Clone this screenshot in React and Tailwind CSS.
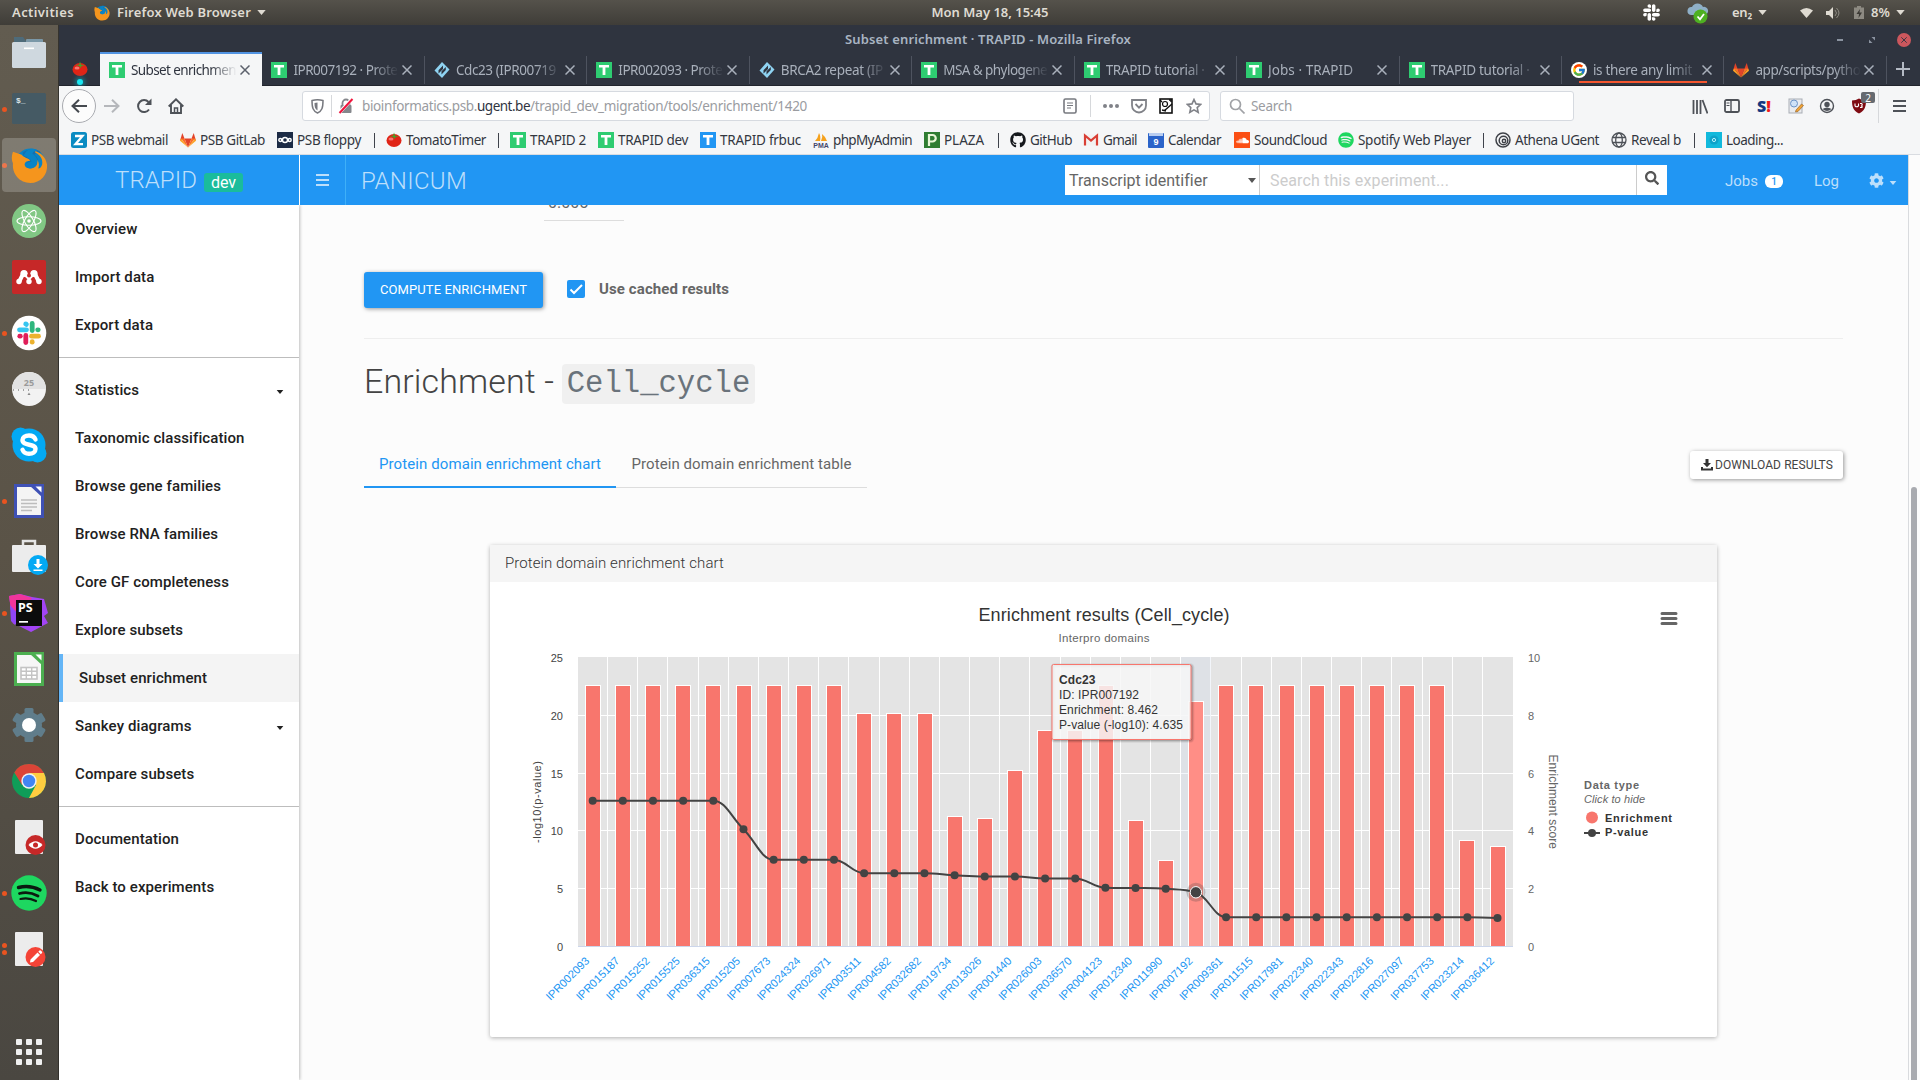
import React, { useLayoutEffect, useRef } from "react";
import { FaGithub, FaSpotify, FaSoundcloud, FaSearch, FaCog, FaSlack } from "react-icons/fa";
import { FcGoogle } from "react-icons/fc";

const UI = "font-['Noto_Sans',sans-serif]";

/* One line of text whose tracking is adjusted so that it fills a given width. */
function Fit({ w, className = "", children }) {
  const ref = useRef(null);
  useLayoutEffect(() => {
    const el = ref.current;
    el.style.letterSpacing = "0px";
    const natural = el.getBoundingClientRect().width;
    const n = el.textContent.length;
    el.style.letterSpacing = (w - natural) / n + "px";
  }, [w, children]);
  return (
    <span ref={ref} className={"inline-block shrink-0 whitespace-pre " + className}>
      {children}
    </span>
  );
}

const Caret = ({ className = "" }) => (
  <svg viewBox="0 0 10 6" className={className} fill="currentColor"><path d="M0 0h10L5 6z" /></svg>
);

/* ---------- small logos ---------- */
const TIcon = ({ blue }) => (
  <svg viewBox="0 0 16 16" className="size-4 shrink-0">
    <rect width="16" height="16" fill={blue ? "#2196f3" : "#2ecc71"} />
    <path d="M3 3h10v2.6H9.4V13H6.6V5.600H3z" fill="#fff" />
  </svg>
);
const Tomato = () => (
  <svg viewBox="0 0 16 16" className="size-4 shrink-0">
    <ellipse cx="8" cy="8.500" rx="7.500" ry="6.500" fill="#e02416" />
    <ellipse cx="5" cy="7" rx="2.500" ry="1.600" fill="#f99" opacity=".7" />
    <path d="M3.500 4 7 3.700 8 .5l1.200 3.200 3.800.5-3.300.9L8.500 7 7 5.100z" fill="#4f9a28" />
  </svg>
);
const Fox = ({ className = "size-4" }) => (
  <svg viewBox="0 0 16 16" className={className + " shrink-0"}>
    <path d="M0 8.800 2.300 1l2.200 5.600z" fill="#e24329" />
    <path d="M16 8.800 13.700 1 11.500 6.600z" fill="#e24329" />
    <path d="M4.500 6.600h7L8 15.500z" fill="#e24329" />
    <path d="M1 6.600h3.500L8 15.500zM15 6.600h-3.500L8 15.500z" fill="#fc6d26" />
    <path d="M0 8.800 1 6.600 8 15.500zM16 8.800 15 6.600 8 15.500z" fill="#fca326" />
  </svg>
);
const Interpro = () => (
  <svg viewBox="0 0 16 16" className="size-4 shrink-0">
    <path d="M8 0 15.500 7.500 8 16 .5 8.500z" fill="#8fd3f2" />
    <path d="M9 3.500 4.500 8.300v3.200L9 7zM7.500 12.500 11.800 8V5L7.500 9.200z" fill="#2f343f" />
  </svg>
);
const Firefox = ({ className }) => (
  <svg viewBox="0 0 38 38" className={className}>
    <circle cx="20" cy="17" r="15.500" fill="#0a84c6" />
    <path d="M12 6C17 1 27 1 31 6c-3-1-6 0-7 2 4 2 5 8 1 12-3 3-8 2-9-1-1-2 0-3 2-4-3-1-5-4-6-9z" fill="#1470b0" />
    <path d="M25 6c5 2 8 7 7 12-1 3-2 4-4 4 1-3 1-6-1-9 0 5-3 9-8 9-3 0-5-2-5-4 0-3 3-4 6-4-3-3-7-3-9-6L2 5c-2 6-1 9 0 12-1 11 7 20 18 20 10 0 18-8 17-19-1-6-4-11-12-14z" fill="#f5951d" />
    <path d="M13 9c4 2 7 3 8 6-2 0-5 1-6 3 0 2 2 4 5 4 5 0 8-4 7-9-1-3-3-5-5-6 0-2 3-4 6-3-5-4-12-3-15 5z" fill="#0a84c6" />
  </svg>
);

/* ---------- desktop top bar ---------- */
function TopBar() {
  return (
    <header className={"flex h-[25px] shrink-0 items-center bg-gradient-to-b from-[#55524b] to-[#3f3d38] text-[13px] font-semibold text-[#dfdbd2] " + UI}>
      <div className="flex w-[910px] items-center pl-3">
        <Fit w={62}>Activities</Fit>
        <Firefox className="ml-5 size-[16px]" />
        <Fit w={134} className="ml-[7px]">Firefox Web Browser</Fit>
        <Caret className="ml-[6px] h-[5px] w-[9px]" />
      </div>
      <div className="flex w-[160px] justify-center"><Fit w={117}>Mon May 18, 15:45</Fit></div>
      <div className="flex flex-1 items-center pl-[572px]">
        <FaSlack className="size-[19px] shrink-0 text-white" />
        <svg viewBox="0 0 22 22" className="ml-[26px] size-[22px] shrink-0">
          <path d="M4 13a4 4 0 0 1 1-8 6 6 0 0 1 11 0 4 4 0 0 1 2 8z" fill="#8fb0c8" />
          <circle cx="13.500" cy="14.500" r="7" fill="#4eb022" />
          <path d="m10.500 14.500 2.500 2.800L17 12" stroke="#fff" strokeWidth="1.800" fill="none" />
        </svg>
        <Fit w={20} className="ml-[23px]">en₂</Fit>
        <Caret className="ml-[6px] h-[5px] w-[9px] shrink-0" />
        <svg viewBox="0 0 13 10" className="ml-[33px] h-[10px] w-[13px] shrink-0"><path d="M0 2.500Q6.500-2.500 13 2.500L6.500 10z" fill="#dfdbd2" /></svg>
        <svg viewBox="0 0 14 12" className="ml-[13px] h-3 w-[14px] shrink-0"><path d="M0 4h3l4-4v12L3 8H0z" fill="#dfdbd2" /><path d="M9 3q3 3 0 6M10.500 1q5 5 0 10" stroke="#8d8a82" fill="none" /></svg>
        <svg viewBox="0 0 10 13" className="ml-[14px] h-[13px] w-[10px] shrink-0"><path d="M3 0h4v1.500h3V13H0V1.500h3z" fill="#8d8a82" /><path d="M6 3 2.500 8H5l-.5 4L8 6.500H5.500z" fill="#3b3934" /></svg>
        <Fit w={19} className="ml-[7px]">8%</Fit>
        <Caret className="ml-[6px] h-[5px] w-[9px] shrink-0" />
      </div>
    </header>
  );
}

/* ---------- dock ---------- */
const D = ({ children }) => <svg viewBox="0 0 36 36" className="size-9 overflow-visible">{children}</svg>;
const dock = [
  { icon: <D><path d="M3 2h9l3 4h17v10H3z" fill="#4e6b7a" /><rect x="15" y="4" width="17" height="8" rx="1" fill="#7b98a8" /><rect x="1" y="7" width="34" height="26" rx="1.500" fill="#cfd8df" /><rect x="13" y="12.500" width="10" height="1.600" fill="#fff" /></D> },
  { dots: 1, icon: <D><rect x="1" y="2" width="34" height="31" rx="1.500" fill="#455a64" /><text x="5" y="12" fontSize="8" fontWeight="700" fill="#dfe6ea" fontFamily="Liberation Mono">$_</text></D> },
  { dots: 1, active: true, icon: <Firefox className="size-[37px]" /> },
  { icon: <D><circle cx="18" cy="18" r="17" fill="#81c784" /><g fill="none" stroke="#fff" strokeWidth="1.100"><ellipse cx="18" cy="18" rx="12" ry="4.300" /><ellipse cx="18" cy="18" rx="12" ry="4.300" transform="rotate(60 18 18)" /><ellipse cx="18" cy="18" rx="12" ry="4.300" transform="rotate(120 18 18)" /></g><circle cx="18" cy="18" r="1.800" fill="#fff" /></D> },
  { icon: <D><rect x="1" y="1" width="34" height="34" rx="2" fill="#c62828" /><path d="M8 23 12 15M28 23 24 15M12.500 13.500 18 19l5.500-5.500" fill="none" stroke="#fff" strokeWidth="4" /><circle cx="8" cy="22.500" r="2.700" fill="#fff" /><circle cx="18" cy="22.500" r="2.700" fill="#fff" /><circle cx="28" cy="22.500" r="2.700" fill="#fff" /><circle cx="13" cy="14.500" r="3.600" fill="#fff" /><circle cx="23" cy="14.500" r="3.600" fill="#fff" /><circle cx="18" cy="16.500" r="2" fill="#c62828" /></D> },
  { dots: 1, icon: <D><circle cx="18" cy="18" r="17.300" fill="#fff" /><g strokeWidth="4.800" strokeLinecap="round"><path d="M8.500 14.800h7" stroke="#36c5f0" /><path d="M21.200 8.500v7" stroke="#2eb67d" /><path d="M20.500 21.200h7" stroke="#ecb22e" /><path d="M14.800 20.500v7" stroke="#e01e5a" /><path d="M14.800 8.800v.1l.6.5" stroke="#36c5f0" /><path d="M27.200 14.800h-.5" stroke="#2eb67d" /><path d="M21.200 27.200v-.5" stroke="#ecb22e" /><path d="M8.800 21.200h.5" stroke="#e01e5a" /></g></D> },
  { icon: <D><circle cx="18" cy="18" r="17" fill="#f2f2f2" /><path d="M1 18a17 17 0 0 1 34 0z" fill="#e2e2e2" /><text x="18" y="15" textAnchor="middle" fontSize="9" fontWeight="700" fill="#9a9a9a" fontFamily="Noto Sans">25</text><path d="M2 19h18" stroke="#888" strokeWidth="1.500" strokeDasharray="1 4" /><path d="m16.500 24 1.500-2.500 1.500 2.500z" fill="#888" /></D> },
  { icon: <D><circle cx="18" cy="18" r="16.500" fill="#03a9f4" /><circle cx="9.500" cy="9.500" r="9" fill="#03a9f4" /><circle cx="26.500" cy="26.500" r="9" fill="#03a9f4" /><path d="M24.500 12.500c-1-2.500-3.500-4-6.500-4-4 0-6.500 1.800-6.500 4.500 0 6.500 13 3 13 9 0 3-2.500 4.800-6.500 4.800-3.500 0-5.500-1.500-6.500-4" fill="none" stroke="#fff" strokeWidth="4.400" strokeLinecap="round" /></D> },
  { dots: 1, icon: <D><path d="M4.500 2.500h27v31h-27z" fill="#f4f4f4" stroke="#3f51b5" strokeWidth="3" /><path d="m18 2 14 13V2z" fill="#3f51b5" /><path d="M24.500 3.500h6v6z" fill="#fff" /><path d="M10 17h16M10 20.500h16M10 24h16M10 27.500h11" stroke="#bdbdbd" strokeWidth="1.500" /></D> },
  { icon: <D><path d="M12 6V2h12v4" fill="none" stroke="#e4e4e4" strokeWidth="2.500" /><rect x="1" y="6" width="34" height="27" rx="1" fill="#ececec" /><circle cx="27" cy="26" r="10" fill="#03a9f4" /><path d="M25.500 20h3v5h3L27 29.500 22.500 25h3zM22.500 30.500h9V32h-9z" fill="#fff" /></D> },
  { dots: 1, icon: <D><path d="M-2 1 9-1l12 3 12 2 4 14-4 3 4 7-17 9-10-5-8-4z" fill="#a344f5" /><path d="m-2 1 11-2 12 4L2 29z" fill="#f0359b" /><path d="M-1 10 8 20 4 30 0 26z" fill="#8f46f7" /><rect x="5" y="5" width="26" height="26" fill="#0c0c0c" /><text x="7" y="17" fontSize="12.500" fontWeight="700" fill="#fff" fontFamily="Noto Sans">PS</text><rect x="8" y="26" width="9" height="1.700" fill="#fff" /></D> },
  { icon: <D><rect x="4.500" y="2.500" width="27" height="31" fill="#f6f6f6" stroke="#4caf50" strokeWidth="3" /><path d="m18 2 14 13V2z" fill="#4caf50" /><path d="M24.500 3.500h6v6z" fill="#fff" /><rect x="10" y="16.500" width="16" height="11.500" fill="#fff" stroke="#c4c4c4" strokeWidth="1.600" /><path d="M10 20.300h16M10 24.200h16M15.300 16.500V28M20.700 16.500V28" stroke="#c4c4c4" strokeWidth="1.400" /></D> },
  { icon: <D><g fill="#607d8b"><circle cx="18" cy="18" r="13" /><rect x="13.500" y="1" width="9" height="34" rx="1.500" /><rect x="13.500" y="1" width="9" height="34" rx="1.500" transform="rotate(60 18 18)" /><rect x="13.500" y="1" width="9" height="34" rx="1.500" transform="rotate(120 18 18)" /></g><circle cx="18" cy="18" r="7" fill="#fff" /></D> },
  { icon: <D><circle cx="18" cy="18" r="17" fill="#0f9d58" /><path d="M3.300 9.500A17 17 0 0 1 33 10H18L11 22z" fill="#db4437" /><path d="M18 10h15a17 17 0 0 1-15 25l7-13z" fill="#ffcd40" /><circle cx="18" cy="18" r="7.700" fill="#f1f1f1" /><circle cx="18" cy="18" r="6.200" fill="#4285f4" /></D> },
  { icon: <D><rect x="4" y="1" width="28" height="34" rx="1" fill="#ececec" /><circle cx="24.500" cy="26" r="10" fill="#c62828" /><path d="M17.500 26q7-7.500 14 0-7 7.500-14 0z" fill="#fff" /><circle cx="24.500" cy="26" r="2.500" fill="#c62828" /></D> },
  { dots: 1, icon: <D><circle cx="18" cy="18" r="17.700" fill="#1ed760" /><g fill="none" stroke="#0b1a10" strokeLinecap="round"><path d="M7.500 12.500q11-3 21.500 2.500" strokeWidth="3.400" /><path d="M8.500 18.500q9.500-2.500 18.500 2.500" strokeWidth="2.800" /><path d="M9.500 24q8-2 15.500 2" strokeWidth="2.200" /></g></D> },
  { dots: 2, icon: <D><rect x="4" y="1" width="28" height="34" rx="1" fill="#ececec" /><circle cx="24.500" cy="26" r="10" fill="#f44336" /><path d="m19 31.500.5-3 7-7 2.500 2.500-7 7zM27.300 20.700l1.200-1.200q.8-.5 1.500.2l1 1q.5.600 0 1.300l-1.200 1.200z" fill="#fff" /></D> },
];

function Dock() {
  return (
    <nav className="flex w-[59px] shrink-0 flex-col border-r border-[#35332e] bg-gradient-to-b from-[#625c50] via-[#5a5347] to-[#4a4741]">
      {dock.map((d, i) => (
        <div key={i} className="flex h-14 shrink-0 items-center">
          <div className="flex w-[9px] flex-col items-end gap-[2px] pr-[2px]">
            {Array.from({ length: d.dots || 0 }, (_, k) => <i key={k} className="size-[5px] rounded-full bg-[#e95420]" />)}
          </div>
          <div className={"-ml-[7px] flex h-[54px] w-[54px] items-center justify-center rounded-[4px] " + (d.active ? "bg-white/20" : "")}>{d.icon}</div>
        </div>
      ))}
      <div className="ml-4 mt-[62px] grid w-[26px] grid-cols-3 gap-[4px]">
        {Array.from({ length: 9 }, (_, i) => <i key={i} className="size-[6px] rounded-[1px] bg-[#f0f0f0]" />)}
      </div>
    </nav>
  );
}

/* ---------- browser chrome ---------- */
const tabs = [
  { t: "Subset enrichmen", w: 105, icon: <TIcon /> },
  { t: "IPR007192 · Prote", w: 104, icon: <TIcon /> },
  { t: "Cdc23 (IPR00719", w: 100, icon: <Interpro /> },
  { t: "IPR002093 · Prote", w: 104, icon: <TIcon /> },
  { t: "BRCA2 repeat (IP", w: 102, icon: <Interpro /> },
  { t: "MSA & phylogene", w: 104, icon: <TIcon /> },
  { t: "TRAPID tutorial ·", w: 99, icon: <TIcon /> },
  { t: "Jobs · TRAPID", w: 85, icon: <TIcon /> },
  { t: "TRAPID tutorial ·", w: 99, icon: <TIcon /> },
  { t: "is there any limit", w: 99, icon: <span className="flex size-4 shrink-0 items-center justify-center rounded-full bg-white"><FcGoogle className="size-[14px]" /></span>, mark: true },
  { t: "app/scripts/pytho", w: 105, icon: <Fox /> },
];

const Cross = ({ className }) => (
  <svg viewBox="0 0 10 10" className={className} stroke="currentColor" strokeWidth="1.500"><path d="m0.500.5 9 9M9.500.5l-9 9" /></svg>
);

function TitleAndTabs() {
  return (
    <div className={"flex h-[61px] shrink-0 flex-col border-b border-[#22252d] bg-[#2f343f] " + UI}>
      <div className="flex h-[27px] items-center pt-[2px]">
        <div className="flex flex-1 justify-center pl-[80px] text-[13px] font-semibold text-[#a9b4c2]"><Fit w={286}>Subset enrichment · TRAPID - Mozilla Firefox</Fit></div>
        <div className="flex w-[83px] items-center text-[#8b93a0]">
          <i className="h-[2px] w-[6px] bg-current" />
          <svg viewBox="0 0 6 6" className="ml-[26px] size-[6px]" fill="currentColor"><path d="M2.500 0H6v3.500zM0 2.500V6h3.500z" /></svg>
          <span className="ml-[22px] flex size-[14px] items-center justify-center rounded-full bg-[#cc575d] text-[#2f343f]"><Cross className="size-[6px]" /></span>
        </div>
      </div>
      <div className="flex h-[33px] text-[13.5px]">
        <div className="flex w-[41px] flex-col items-center pt-[9px]">
          <Tomato />
          <i className="mt-[2px] size-[6px] rounded-full bg-[#19e5f0] shadow-[0_0_4px_2px_rgba(10,160,180,.6)]" />
        </div>
        {tabs.map((tab, i) => {
          const on = i === 0;
          return (
            <div key={i} className={"relative flex w-[162.450px] shrink-0 items-center pl-[9px] " + (on ? "h-[34px] border-t-2 border-[#5294e2] bg-[#f5f6f7] text-[#2f343f]" : "pt-[3px] text-[#a9b0bb]")}>
              {tab.icon}
              <div className="ml-[6px] w-[106px] pt-px [mask-image:linear-gradient(to_right,#000_75%,transparent_100%)]"><Fit w={tab.w}>{tab.t}</Fit></div>
              <Cross className={"ml-[3px] size-[10px] " + (on ? "text-[#5c616c]" : "")} />
              {!on && <i className="ml-auto h-[28px] w-px bg-[#4e535f]" />}
              {tab.mark && <i className="absolute bottom-[2px] left-[17px] h-[2px] w-[128px] bg-[#f4562f]" />}
            </div>
          );
        })}
        <div className="flex flex-1 items-center justify-center text-[#b4bac4]"><svg viewBox="0 0 14 14" className="size-[14px]" stroke="currentColor" strokeWidth="2"><path d="M7 0v14M0 7h14" /></svg></div>
      </div>
    </div>
  );
}

function NavBar() {
  return (
    <div className={"flex h-[40px] shrink-0 items-center bg-[#f5f6f7] text-[13.5px] text-[#5c616c] " + UI}>
      <span className="ml-[3px] flex size-[34px] items-center justify-center rounded-full border border-[#a9abb0] bg-[#fcfcfc]">
        <svg viewBox="0 0 16 14" className="h-[14px] w-4" fill="none" stroke="#45494f" strokeWidth="2"><path d="M16 7H1.500M8 .8 1.500 7 8 13.200" /></svg>
      </span>
      <svg viewBox="0 0 16 14" className="ml-[8px] h-[14px] w-4" fill="none" stroke="#b5b7bb" strokeWidth="2"><path d="M0 7h14.500M8 .8 14.500 7 8 13.200" /></svg>
      <svg viewBox="0 0 16 16" className="ml-[16px] size-4" fill="none" stroke="#4e5258" strokeWidth="2"><path d="M13 11.500A6 6 0 1 1 12.500 4" /><path d="M15.500.5v6.500H9z" fill="#4e5258" stroke="none" /></svg>
      <svg viewBox="0 0 16 16" className="ml-[16px] size-4" fill="none" stroke="#4e5258" strokeWidth="1.900"><path d="M.7 8.500 8 1.300l7.300 7.200M3 7v8h10V7" /><path d="M6.500 14.500V10h3v4.500" strokeWidth="1.500" /></svg>

      <div className="ml-[118px] flex h-[30px] w-[908px] items-center rounded-[3px] border border-[#d6dae0] bg-white">
        <svg viewBox="0 0 13 15" className="ml-[8px] h-[15px] w-[13px]" fill="none" stroke="#77797f" strokeWidth="1.500"><path d="M1 1.500Q6.500 0 12 1.500C12 9 11 12 6.500 14 2 12 1 9 1 1.500z" /><path d="M6.500 3.500V11.500C4 10 3.500 8 3.500 4z" fill="#77797f" stroke="none" /></svg>
        <i className="ml-[7px] h-[22px] w-px bg-[#d6d8db]" />
        <svg viewBox="0 0 16 16" className="ml-[6px] size-4"><path d="M4.500 8V5a3.500 3.500 0 0 1 7 0v3" fill="none" stroke="#85878c" strokeWidth="1.800" /><rect x="2.500" y="7" width="11" height="8" rx="1" fill="#85878c" /><path d="M1 15 14 1" stroke="#fff" strokeWidth="3.500" /><path d="M1.500 15 14.500 1" stroke="#f0143c" strokeWidth="2" /></svg>
        <Fit w={115} className="ml-[8px] text-[#9a9ca1]">bioinformatics.psb.</Fit>
        <Fit w={53} className="text-[#2f343f]">ugent.be</Fit>
        <Fit w={277} className="text-[#9a9ca1]">/trapid_dev_migration/tools/enrichment/1420</Fit>
        <svg viewBox="0 0 14 16" className="ml-[256px] h-4 w-[14px]" fill="none" stroke="#77797f" strokeWidth="1.600"><rect x="1" y="1" width="12" height="14" rx="1.500" /><path d="M4 5h6M4 7.500h6M4 10h4" strokeWidth="1.100" /></svg>
        <i className="ml-[13px] h-[22px] w-px bg-[#d6d8db]" />
        <span className="ml-[12px] flex gap-[2px]">{[0, 1, 2].map(k => <i key={k} className="size-[4px] rounded-full bg-[#808288]" />)}</span>
        <svg viewBox="0 0 16 15" className="ml-[12px] h-[15px] w-4" fill="none" stroke="#808288" strokeWidth="1.800"><path d="M1 1h14v5.500a7 7 0 0 1-14 0z" /><path d="m4.500 5 3.500 3.600L11.500 5" /></svg>
        <svg viewBox="0 0 14 16" className="ml-[12px] h-4 w-[14px]" fill="none" stroke="#111" strokeWidth="1.600"><rect x="1" y="1" width="12" height="14" /><circle cx="6" cy="6" r="2.500" strokeWidth="1.200" /><path d="m3 4-2-2M10 2h2v2M5 13 13 6M3 12l4 1" strokeWidth="1.400" /></svg>
        <svg viewBox="0 0 16 16" className="ml-[13px] size-4" fill="none" stroke="#808288" strokeWidth="1.600"><path d="m8 1.500 2 4.400 4.700.5-3.500 3.200 1 4.700L8 11.900l-4.200 2.400 1-4.700L1.300 6.400 6 5.900z" /></svg>
      </div>

      <div className="ml-[10px] flex h-[30px] w-[354px] items-center rounded-[3px] border border-[#d6dae0] bg-white text-[#9a9ca1]">
        <svg viewBox="0 0 16 16" className="ml-[8px] size-4" fill="none" stroke="#a0a2a6" strokeWidth="1.700"><circle cx="6.500" cy="6.500" r="5" /><path d="m10.500 10.500 5 5" /></svg>
        <Fit w={41} className="ml-[6px]">Search</Fit>
      </div>

      <svg viewBox="0 0 16 15" className="ml-[118px] h-[15px] w-4" stroke="#4e5258" strokeWidth="1.800"><path d="M1.500 1v14M5 1v14M8.500 1v14M10.500 1l5 13.500" /></svg>
      <svg viewBox="0 0 16 14" className="ml-[16px] h-[14px] w-4" fill="none" stroke="#4e5258" strokeWidth="1.800"><rect x="1" y="1" width="14" height="12" rx="1.500" /><path d="M7 1v12" strokeWidth="1.400" /><path d="M2.500 4h3M2.500 6.500h3" strokeWidth="1" /></svg>
      <span className="ml-[17px] w-[14px] text-[16px] leading-4 font-black text-[#14387f]">S<span className="text-[#f01c1c]">!</span></span>
      <svg viewBox="0 0 16 16" className="ml-[17px] size-4"><rect x="1" y="1" width="13" height="14" fill="#e9ebee" stroke="#a9adb5" /><circle cx="6" cy="5.500" r="3.500" fill="#cfe2f7" stroke="#6b93c7" /><path d="m8 12 5.500-6 2 1.500-5.500 6-2.500.5z" fill="#efa235" stroke="#8f5a1d" strokeWidth=".6" /></svg>
      <svg viewBox="0 0 16 16" className="ml-[15px] size-4"><circle cx="8" cy="8" r="6.500" fill="none" stroke="#4e5258" strokeWidth="1.400" /><circle cx="8" cy="6.500" r="2.700" fill="#4e5258" /><path d="M3.500 11q4.500-3 9 0-4.500 4-9 0z" fill="#4e5258" /></svg>
      <span className="relative ml-[16px] size-4">
        <svg viewBox="0 0 16 16" className="block size-4"><path d="M1 2.500Q5 2.500 8 .5q3 2 7 2C15 9 13.500 13 8 15.500 2.500 13 1 9 1 2.500z" fill="#7f0b12" /><path d="M4 5.500v2.300q1.700 2 3.500 0V5.500M9 5.500h1.500q1.500 1.300 0 2.500 1.500 1.200 0 1.500H9" fill="none" stroke="#fff" strokeWidth="1.100" /></svg>
        <span className="absolute -top-[6px] left-[10px] flex h-[11px] w-[14px] items-center justify-center rounded-[2px] bg-[#666a70] text-[10px] leading-none text-white">2</span>
      </span>
      <i className="ml-[11px] h-[34px] w-px bg-[#d6d8db]" />
      <span className="ml-[14px] flex flex-col gap-[3px]">{[0, 1, 2].map(k => <i key={k} className="h-[2px] w-[13px] bg-[#4e5258]" />)}</span>
    </div>
  );
}

const Bar = () => <i className="mr-[11px] h-[15px] w-px shrink-0 bg-[#3f434b]" />;
const bookmarks = [
  { s: "w-[109px]", w: 77, t: "PSB webmail", i: <svg viewBox="0 0 16 16" className="size-4"><rect width="16" height="16" rx="2.500" fill="#0a8bc2" /><path d="M4 4h7.500l-7 8.200H12" stroke="#fff" strokeWidth="2.300" fill="none" /></svg> },
  { s: "w-[97px]", w: 65, t: "PSB GitLab", i: <Fox /> },
  { s: "w-[97px]", w: 64, t: "PSB floppy", i: <svg viewBox="0 0 16 16" className="size-4"><rect width="16" height="16" fill="#1c2b45" /><g fill="none" stroke="#fff" strokeWidth="1.400"><circle cx="8" cy="8" r="2.500" /><circle cx="3.300" cy="8" r="1.500" /><circle cx="12.700" cy="8" r="1.500" /></g></svg>, bar: true },
  { s: "w-[112px]", w: 80, t: "TomatoTimer", i: <Tomato />, bar: true },
  { s: "w-[88px]", w: 56, t: "TRAPID 2", i: <TIcon /> },
  { s: "w-[102px]", w: 70, t: "TRAPID dev", i: <TIcon /> },
  { s: "w-[113px]", w: 81, t: "TRAPID frbuc", i: <TIcon blue /> },
  { s: "w-[111px]", w: 79, t: "phpMyAdmin", i: <svg viewBox="0 0 16 16" className="size-4"><path d="M2 9Q5 6 6 1q2 3 1 8zM8 9q2-4 1-7 4 3 5 7z" fill="#f5a11c" /><text x="8" y="15.500" fontSize="7" fontWeight="700" textAnchor="middle" fill="#43466b" fontFamily="Liberation Sans">PMA</text></svg> },
  { s: "w-[74px]", w: 40, t: "PLAZA", i: <svg viewBox="0 0 16 16" className="size-4"><rect width="16" height="16" fill="#2f7d32" /><path d="M5 14V3h3.500a3 3 0 0 1 0 6.500H6" fill="none" stroke="#e9f7d8" strokeWidth="2.200" /></svg>, bar: true },
  { s: "w-[73px]", w: 42, t: "GitHub", i: <FaGithub className="size-4 text-[#15181c]" /> },
  { s: "w-[65px]", w: 34, t: "Gmail", i: <svg viewBox="0 0 16 16" className="size-4"><path d="M1 2.500h14v11H1z" fill="#f2f2f2" /><path d="M2 13.500V3.500l6 5 6-5v10" fill="none" stroke="#d93f35" strokeWidth="2.200" /></svg> },
  { s: "w-[86px]", w: 53, t: "Calendar", i: <svg viewBox="0 0 16 16" className="size-4"><rect x="0" y="1" width="16" height="15" rx="1" fill="#2a63c9" /><path d="M1 1h14v3H1z" fill="#b9cdf0" /><text x="8" y="13" fontSize="9" fontWeight="700" textAnchor="middle" fill="#fff" fontFamily="Liberation Sans">9</text></svg> },
  { s: "w-[104px]", w: 73, t: "SoundCloud", i: <span className="flex size-4 items-center justify-center bg-[#fb4f14] text-white"><FaSoundcloud className="size-[13px]" /></span> },
  { s: "w-[145px]", w: 113, t: "Spotify Web Player", i: <FaSpotify className="size-4 text-[#1ed760]" />, bar: true },
  { s: "w-[116px]", w: 84, t: "Athena UGent", i: <svg viewBox="0 0 16 16" className="size-4" fill="none" stroke="#3f4248" strokeWidth="1.500"><circle cx="8" cy="8" r="7" /><circle cx="8.500" cy="8.500" r="4.300" /><circle cx="9" cy="9" r="1.700" /></svg> },
  { s: "w-[83px]", w: 50, t: "Reveal b", i: <svg viewBox="0 0 16 16" className="size-4" fill="none" stroke="#4e5258" strokeWidth="1.300"><circle cx="8" cy="8" r="7" /><ellipse cx="8" cy="8" rx="3.300" ry="7" /><path d="M1.500 5.500h13M1.500 10.500h13" /></svg>, bar: true },
  { s: "w-[90px]", w: 57, t: "Loading...", i: <svg viewBox="0 0 16 16" className="size-4"><rect width="16" height="16" fill="#11b9dc" /><circle cx="8" cy="8" r="4.500" fill="#0da3ca" /><circle cx="8" cy="8" r="1.600" fill="none" stroke="#b9f1fa" /></svg> },
];

function Bookmarks() {
  return (
    <div className={"flex h-[29px] shrink-0 items-center border-b border-[#d9dce1] bg-[#f5f6f7] pl-3 text-[13.5px] text-[#33373f] " + UI}>
      {bookmarks.map((b) => (
        <React.Fragment key={b.t}>
          <div className={"flex shrink-0 items-center gap-1 " + b.s}>
            <span className="shrink-0">{b.i}</span>
            <Fit w={b.w}>{b.t}</Fit>
          </div>
          {b.bar && <Bar />}
        </React.Fragment>
      ))}
    </div>
  );
}

/* ---------- page ---------- */
function PageHeader() {
  return (
    <div className="flex h-[50px] w-[1849px] shrink-0 bg-[#2196f3] font-[Roboto,sans-serif] text-[#bcdffb]">
      <div className="flex w-[241px] items-center border-r border-white pl-[56px]">
        <Fit w={82} className="text-[24px] font-light">TRAPID</Fit>
        <span className="ml-[7px] mt-[5px] flex h-[19px] w-[39px] items-center justify-center rounded-[3px] bg-[#1abc9c] text-[16px] text-white"><Fit w={25}>dev</Fit></span>
      </div>
      <div className="flex w-[46px] items-center justify-center border-r border-[#3fb0f8]">
        <span className="flex flex-col gap-[3px]">{[0, 1, 2].map(k => <i key={k} className="h-[2px] w-[13px] bg-[#bcdffb]" />)}</span>
      </div>
      <div className="flex w-[719px] items-center pl-[15px]"><Fit w={106} className="pt-[2px] text-[24px] font-light">PANICUM</Fit></div>
      <div className="flex items-center">
        <div className="flex h-[30px] w-[195px] items-center justify-between border-r border-[#ccc] bg-white pl-[4px] pr-[3px] text-[16px] text-[#666]">
          <Fit w={138} className="pt-[2px]">Transcript identifier</Fit><Caret className="h-[5px] w-[8px] text-[#555]" />
        </div>
        <div className="flex h-[30px] w-[377px] items-center border-r border-[#ccc] bg-white pl-[10px] text-[16px] text-[#ccc]"><Fit w={179} className="pt-[2px]">Search this experiment...</Fit></div>
        <div className="flex h-[30px] w-[30px] items-center justify-center bg-white pb-1 text-[#555]"><FaSearch className="size-[14px]" /></div>
      </div>
      <div className="flex flex-1 items-center pl-[58px] pt-[2px] text-[15px]">
        <Fit w={33}>Jobs</Fit>
        <span className="ml-[7px] flex h-[13px] w-[18px] items-center justify-center rounded-[6px] bg-white text-[10px] font-medium text-[#2196f3]">1</span>
        <Fit w={25} className="ml-[31px]">Log</Fit>
        <FaCog className="-mt-[2px] ml-[30px] size-[15px]" />
        <Caret className="ml-[5px] mt-1 h-[4px] w-[8px]" />
      </div>
    </div>
  );
}

const menu = [
  ["Overview"], ["Import data"], ["Export data"], null,
  ["Statistics", true], ["Taxonomic classification"], ["Browse gene families"], ["Browse RNA families"],
  ["Core GF completeness"], ["Explore subsets"], ["Subset enrichment"], ["Sankey diagrams", true], ["Compare subsets"], null,
  ["Documentation"], ["Back to experiments"],
];

function Sidebar() {
  return (
    <aside className="z-10 w-60 shrink-0 bg-white font-[Roboto,sans-serif] text-[15px] font-medium tracking-[0.1px] text-[#212121] shadow-[1px_0_3px_rgba(0,0,0,.25)]">
      {menu.map((m, i) => m === null ? <div key={i} className="my-2 h-px bg-[#bdbdbd]" /> : (
        <div key={i} className={"flex h-12 items-center justify-between pt-px pr-[15px] " + (m[0] === "Subset enrichment" ? "border-l-4 border-[#64b5f6] bg-[#f4f4f4] pl-4" : "pl-4")}>
          {m[0]}
          {m[1] && <Caret className="mt-[2px] h-[4px] w-[8px]" />}
        </div>
      ))}
    </aside>
  );
}

/* ---------- chart ---------- */
const X0 = 578, STEP = 935 / 31, YB = 946.5, SCALE = 28.9;
const series = [
  ["IPR002093", 9.03, 800.7], ["IPR015187", 9.03, 800.7], ["IPR015252", 9.03, 800.7], ["IPR015525", 9.03, 800.7], ["IPR036315", 9.03, 800.7],
  ["IPR015205", 9.03, 829.3], ["IPR007673", 9.03, 859.8], ["IPR024324", 9.03, 859.8], ["IPR026971", 9.03, 859.8],
  ["IPR003511", 8.060, 873.2], ["IPR004582", 8.060, 873.2], ["IPR032682", 8.060, 873.2], ["IPR019734", 4.490, 875.3], ["IPR013026", 4.420, 876.6], ["IPR001440", 6.080, 876.6],
  ["IPR026003", 7.460, 878.4], ["IPR036570", 7.460, 878.4], ["IPR004123", 9.03, 887.7], ["IPR012340", 4.350, 888], ["IPR011990", 2.970, 888.8],
  ["IPR007192", 8.462, 892.3],
  ["IPR009361", 9.03, 917.3], ["IPR011515", 9.03, 917.3], ["IPR017981", 9.03, 917.3], ["IPR022340", 9.03, 917.3], ["IPR022343", 9.03, 917.3], ["IPR022816", 9.03, 917.3], ["IPR027097", 9.03, 917.3], ["IPR037753", 9.03, 917.3],
  ["IPR023214", 3.660, 917.3], ["IPR036412", 3.450, 917.9],
];
const HOVER = 20;
const cx = (i) => X0 + STEP * (i + 0.5) - 0.4;

/* Smooth curve through the p-value points, without overshoot at the plateaus. */
function splinePath() {
  const p = series.map((s, i) => [cx(i), s[2]]);
  let d = `M${p[0][0]} ${p[0][1]}`;
  let rc = p[0];
  for (let i = 1; i < p.length; i++) {
    const [x, y] = p[i];
    let left = [x, y], right = [x, y];
    if (i < p.length - 1) {
      const a = p[i - 1], b = p[i + 1];
      let ly = (1.5 * y + a[1]) / 2.5, ry = (1.5 * y + b[1]) / 2.5;
      const lx = (1.5 * x + a[0]) / 2.5, rx = (1.5 * x + b[0]) / 2.5;
      const corr = ((ry - ly) * (rx - x)) / (rx - lx) + y - ry;
      ly += corr; ry += corr;
      if (ly > a[1] && ly > y) { ly = Math.max(a[1], y); ry = 2 * y - ly; } else if (ly < a[1] && ly < y) { ly = Math.min(a[1], y); ry = 2 * y - ly; }
      if (ry > b[1] && ry > y) { ry = Math.max(b[1], y); ly = 2 * y - ry; } else if (ry < b[1] && ry < y) { ry = Math.min(b[1], y); ly = 2 * y - ry; }
      left = [lx, ly]; right = [rx, ry];
    }
    d += `C${rc[0]} ${rc[1]} ${left[0]} ${left[1]} ${x} ${y}`;
    rc = right;
  }
  return d;
}

function Chart() {
  return (
    <svg viewBox="490 582 1227 455" className="block h-[455px] w-[1227px]" fontFamily="'Liberation Sans', Arial, sans-serif">
      <text x="978.500" y="620.5" fontSize="18" fill="#333" textLength="251">Enrichment results (Cell_cycle)</text>
      <text x="1058.500" y="642" fontSize="11.500" fill="#666" textLength="91">Interpro domains</text>
      <g stroke="#666" strokeWidth="3" strokeLinecap="round"><path d="M1662 613.500h14M1662 618.500h14M1662 623.500h14" /></g>

      <rect x="578" y="657" width="935" height="290" fill="#e4e4e4" />
      {series.slice(1).map((_, i) => {
        const x = Math.round(X0 + STEP * (i + 1)) - 0.5;
        return <path key={i} d={`M${x} 657V946`} stroke="#fff" />;
      })}
      {[715.5, 773.5, 830.5, 888.5].map((y) => <path key={y} d={`M578 ${y}H1513`} stroke="#fff" />)}
      <rect x="1181" y="657" width="30" height="289" fill="#ccd6eb" fillOpacity=".25" />
      {series.map((s, i) => {
        const x = Math.round(X0 + STEP * i + 7.8) - 0.5, y = Math.round(YB - s[1] * SCALE) - 0.5;
        return <rect key={i} x={x} y={y} width="15" height={YB - y} fill={i === HOVER ? "#ff8e86" : "#f8766d"} stroke="#fff" />;
      })}
      <path d="M578 946.500H1513" stroke="#ccd6eb" />
      <path d={splinePath()} fill="none" stroke="#434343" strokeWidth="2" />
      {series.map((s, i) => i === HOVER
        ? <g key={i}><circle cx={cx(i)} cy={s[2]} r="9.500" fill="#434343" fillOpacity=".25" /><circle cx={cx(i)} cy={s[2]} r="5.700" fill="#434343" stroke="#fff" /></g>
        : <circle key={i} cx={cx(i)} cy={s[2]} r="4" fill="#434343" />)}

      <g fontSize="11" fill="#444" textAnchor="end">
        {[25, 20, 15, 10, 5, 0].map((v, i) => <text key={v} x="563" y={662 + i * 57.8}>{v}</text>)}
      </g>
      <g fontSize="11" fill="#666">
        {[10, 8, 6, 4, 2, 0].map((v, i) => <text key={v} x="1528" y={662 + i * 57.8}>{v}</text>)}
      </g>
      <text transform="translate(541 843) rotate(-90)" x="0" y="0" fontSize="11" fill="#444" textLength="82">-log10(p-value)</text>
      <text transform="translate(1549 754.500) rotate(90)" x="0" y="0" fontSize="12" fill="#666" textLength="94.500">Enrichment score</text>
      <g fontSize="11.200" fill="#2196f3" textAnchor="end">
        {series.map((s, i) => <text key={s[0]} transform={`translate(${cx(i) - 2.6} 961.500) rotate(-45)`}>{s[0]}</text>)}
      </g>

      <text x="1584" y="789" fontSize="11" fontWeight="700" fill="#666" textLength="55">Data type</text>
      <text x="1584" y="803" fontSize="11" fontStyle="italic" fill="#666" textLength="61">Click to hide</text>
      <circle cx="1592" cy="817.500" r="6" fill="#f8766d" />
      <text x="1605" y="822" fontSize="11" fontWeight="700" fill="#333" textLength="67">Enrichment</text>
      <path d="M1584 833h16" stroke="#434343" strokeWidth="2" /><circle cx="1592" cy="833" r="4" fill="#434343" />
      <text x="1605" y="836" fontSize="11" fontWeight="700" fill="#333" textLength="43">P-value</text>

      <g fill="none" stroke="#000">
        <rect x="1053" y="665.500" width="139" height="75" rx="2" strokeWidth="5" strokeOpacity=".05" />
        <rect x="1053" y="665.500" width="139" height="75" rx="2" strokeWidth="3" strokeOpacity=".1" />
        <rect x="1053" y="665.500" width="139" height="75" rx="2" strokeWidth="1" strokeOpacity=".15" />
      </g>
      <rect x="1052" y="664.500" width="139" height="75" rx="1.500" fill="#f7f7f7" fillOpacity=".85" stroke="#f8766d" />
      <g fontSize="12" fill="#333">
        <text x="1059" y="684" fontWeight="700" textLength="36.500">Cdc23</text>
        <text x="1059" y="699" textLength="80">ID: IPR007192</text>
        <text x="1059" y="714" textLength="99">Enrichment: 8.462</text>
        <text x="1059" y="729" textLength="124">P-value (-log10): 4.635</text>
      </g>
    </svg>
  );
}

function Main() {
  return (
    <main className="flex min-w-0 flex-1 flex-col overflow-hidden bg-[#fcfcfc] px-[65px] font-[Roboto,sans-serif] text-[#666]">
      <div className="ml-[180px] h-4 w-20 shrink-0 border-b border-[#ddd] pl-1 text-[16px] leading-5"><div className="-mt-[12px]">0.005</div></div>
      <div className="mt-[51px] flex h-9 shrink-0 items-center">
        <div className="flex h-9 w-[179px] items-center justify-center rounded-[3px] bg-[#2196f3] text-[13px] text-white shadow-[1px_1px_4px_rgba(0,0,0,.4)]"><Fit w={147}>COMPUTE ENRICHMENT</Fit></div>
        <span className="-mt-[2px] ml-6 flex size-[18px] items-center justify-center rounded-[2px] bg-[#2196f3] text-white">
          <svg viewBox="0 0 18 18" className="size-[18px]" fill="none" stroke="#fff" strokeWidth="2"><path d="m3.500 9.500 3.500 3.500L15 5" /></svg>
        </span>
        <Fit w={130} className="-mt-[2px] ml-[14px] text-[15px] font-bold">Use cached results</Fit>
      </div>
      <div className="mt-[30px] h-px shrink-0 bg-[#eee]" />
      <h2 className="mt-[25px] flex h-10 shrink-0 items-center text-[34px] leading-10 font-light text-[#444]">
        <Fit w={190} className="pb-[7px]">Enrichment -</Fit>
        <code className="ml-2 flex h-10 w-[193px] items-center justify-center rounded-[4px] bg-[#f0f0f0] pb-px font-['Liberation_Mono',monospace] text-[30.600px] font-normal text-[#6a737b]">Cell_cycle</code>
      </h2>
      <div className="mt-9 flex h-12 shrink-0 items-start justify-between text-[15px]">
        <div className="flex">
          <div className="flex h-12 w-[252px] items-center justify-center border-b-2 border-[#2196f3] pt-[2px] text-[#2196f3]"><Fit w={222}>Protein domain enrichment chart</Fit></div>
          <div className="flex h-12 w-[251px] items-center justify-center border-b border-[#ddd] pt-px"><Fit w={220}>Protein domain enrichment table</Fit></div>
        </div>
        <div className="mt-[11px] flex h-7 w-[153px] items-center rounded-[3px] bg-white pl-[11px] text-[12px] text-[#444] shadow-[1px_1px_4px_rgba(0,0,0,.4)]">
          <svg viewBox="0 0 12 12" className="size-3" fill="#333"><path d="M4.500 0h3v4H10L6 8.200 2 4h2.500z" /><path d="M0 8h2v1.500h8V8h2v3.500H0z" /></svg>
          <Fit w={118} className="ml-[2px]">DOWNLOAD RESULTS</Fit>
        </div>
      </div>
      <section className="ml-[126px] mt-[57px] h-[492px] w-[1227px] shrink-0 rounded-[2px] bg-white shadow-[0_1px_4px_rgba(0,0,0,.3)]">
        <div className="flex h-[37px] items-center bg-[#f5f5f5] pl-[15px] text-[15px] font-light text-[#333]"><Fit w={219}>Protein domain enrichment chart</Fit></div>
        <Chart />
      </section>
    </main>
  );
}

export default function App() {
  return (
    <div className="flex h-[1080px] w-[1920px] flex-col overflow-hidden bg-[#fcfcfc]">
      <TopBar />
      <div className="flex min-h-0 flex-1">
        <Dock />
        <div className="flex min-w-0 flex-1 flex-col">
          <TitleAndTabs />
          <NavBar />
          <Bookmarks />
          <div className="flex min-h-0 flex-1">
            <div className="flex w-[1849px] flex-col">
              <div className="relative z-20 flex"><PageHeader /></div>
              <div className="flex min-h-0 flex-1"><Sidebar /><Main /></div>
            </div>
            <div className="w-3 border-l border-[#d9dbde] bg-[#fcfcfc] pl-[2px] pt-[332px]"><div className="h-[593px] w-[6px] rounded-t-full bg-[#a9abb0]" /></div>
          </div>
        </div>
      </div>
    </div>
  );
}
